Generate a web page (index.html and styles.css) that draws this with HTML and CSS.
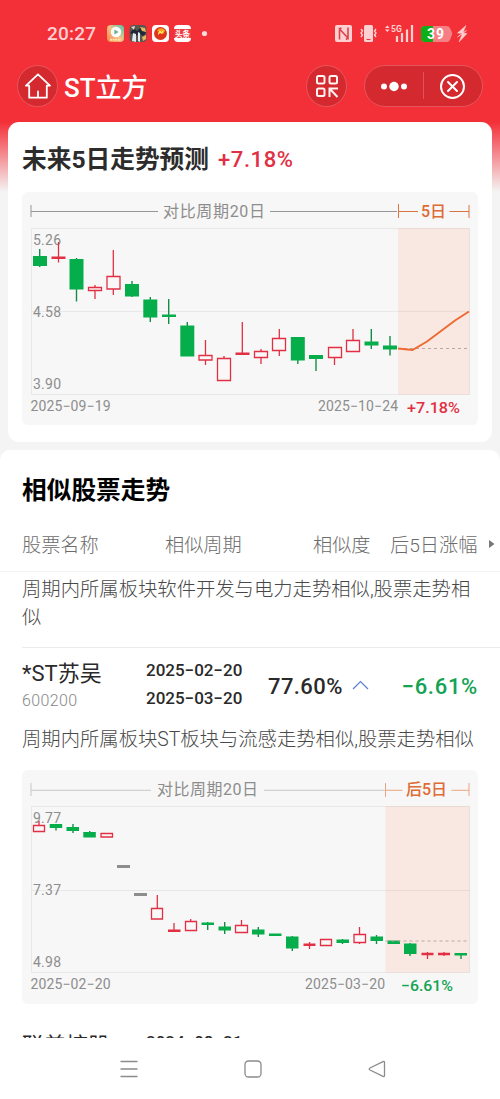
FILE: index.html
```html
<!DOCTYPE html>
<html lang="zh-CN">
<head>
    <meta charset="UTF-8">
    <meta name="viewport" content="width=device-width, initial-scale=1.0">
    <title>ST立方</title>
    <link rel="stylesheet" href="styles.css">
</head>
<body>
    <div class="statusbar">
        <span class="clock">20:27</span>
        <svg class="apps" width="102" height="18" viewBox="0 0 102 18">
            <defs>
                <linearGradient id="video" x1="0" y1="1" x2="1" y2="0">
                    <stop offset="0" stop-color="#ff8248"/>
                    <stop offset="0.5" stop-color="#f2c184"/>
                    <stop offset="1" stop-color="#48c9b2"/>
                </linearGradient>
            </defs>
            <rect x="0" y="0" width="17" height="17" rx="4" fill="url(#video)"/>
            <circle cx="9" cy="7" r="5.2" fill="#fff"/>
            <path d="M7.4 4.5l4.3 2.5-4.3 2.5z" fill="#63b487"/>
            <path d="M3 14.8h11" stroke="#ffe3b0" stroke-width="2" stroke-dasharray="2 .6"/>
            <rect x="22.5" y="0" width="17" height="17" rx="4" fill="#5b5650"/>
            <path d="M23 8l4-5 3 3 4-4 5 6-3 3-4-3-3 3z" fill="#222936"/>
            <path d="M25 16l1-8 3 1v8zM31 16V7l2 1v9z" fill="#e1eaf0"/>
            <path d="M33 2l5 1 1 4-4-1zM35 12l4-2v4l-3 2z" fill="#e5b660"/>
            <path d="M24 2l4-1-1 4z" fill="#e0d6c2"/>
            <rect x="45" y="0" width="17" height="17" rx="4" fill="#fff"/>
            <circle cx="53.5" cy="8.5" r="6.5" fill="#e1341d"/>
            <path d="M50 6c2-4 7-3 8 0l-2 3-3-2z" fill="#f6a020"/>
            <path d="M51 8l2-3 1 2 3-2-2 4-2-1-2 2z" fill="#ffe85d"/>
            <rect x="67" y="0" width="17" height="17" rx="4" fill="#fff"/>
            <rect x="67" y="4" width="17" height="9" fill="#ee3c40"/>
            <text x="68" y="11.5" class="app-label">头条</text>
            <circle cx="97.5" cy="8.5" r="2.6" fill="#ffd8d9"/>
        </svg>
        <svg class="signals" width="136" height="20" viewBox="0 0 136 20">
            <rect x="0" y="1" width="17" height="17" rx="2" fill="#ffd0d2"/>
            <path d="M4.500 15.500V5l8.500 9V3.500M4.500 5l2-1M13 14l-2 1.500" fill="none" stroke="#d8444c" stroke-width="1.6"/>
            <rect x="29" y="1" width="9" height="17" rx="1.5" fill="#ffd0d2"/>
            <path d="M31.5 15.5h4" stroke="#ed3540"/>
            <path d="M26 5l1.500 2-1.500 2 1.500 2-1.500 2M41 5l-1.500 2 1.500 2-1.500 2 1.500 2" fill="none" stroke="#ffd0d2" stroke-width="1.400"/>
            <path d="M50 4l2.300-2.500L54.600 4zM50 5.500l2.300 2.500 2.300-2.500z" fill="#ffd0d2"/>
            <text x="56" y="7.700" class="net-label">5G</text>
            <path d="M62 18v-6M67 18V9M72 18V5.500M77 18V1" stroke="#ffd0d2" stroke-width="2.200"/>
            <path d="M90 2h22q2 0 3 2l2 4.200q.5 1.300 0 2.500L115 16q-1 2-3 2H90q-4 0-4-4V6q0-4 4-4z" fill="#f57f84"/>
            <path d="M98 2h-8q-4 0-4 4v8q0 4 4 4h8z" fill="#0caf16"/>
            <text x="92" y="15" textLength="17" class="battery-label">39</text>
            <path d="M131 1.500l-8.500 7.500 5 .4-3.500 8.600 8-8.500-4.200-.5z" fill="#ffd0d2" stroke="#ffd0d2" stroke-width=".5"/>
            <path d="M122.500 13l9-6.500" stroke="#ffd0d2"/>
        </svg>
    </div>

    <div class="navbar">
        <span class="round-btn">
            <svg width="28" height="28" viewBox="0 0 28 28" fill="none" stroke="#fff" stroke-width="1.800" stroke-linecap="round" stroke-linejoin="round">
                <path d="M2 13.700L14 2.300l12 11.400h-3.200v12H5.200v-12zM14 19.500v5.500"/>
            </svg>
        </span>
        <h1>ST立方</h1>
        <span class="round-btn scan-btn">
            <svg width="24" height="24" viewBox="0 0 24 24" fill="none" stroke="#fff4f1" stroke-width="2">
                <rect x="2" y="2" width="7.500" height="7.500" rx="1.500"/>
                <rect x="14.500" y="2" width="7.500" height="7.500" rx="1.500"/>
                <rect x="2" y="14.500" width="7.500" height="7.500" rx="1.500"/>
                <path d="M14.500 23v-8.500h8.500M14.500 14.500l8 8.500"/>
            </svg>
        </span>
        <div class="capsule">
            <svg width="118" height="40" viewBox="0 0 118 40">
                <circle cx="19" cy="20.500" r="3" fill="#fff"/>
                <circle cx="29" cy="20.500" r="4.700" fill="#fff"/>
                <circle cx="39" cy="20.500" r="3" fill="#fff"/>
                <path d="M58.500 6v27" stroke="#e45157"/>
                <circle cx="87.500" cy="20.500" r="11.500" fill="none" stroke="#fff" stroke-width="2"/>
                <path d="M83 16l9 9M92 16l-9 9" stroke="#fff" stroke-width="2" stroke-linecap="round"/>
            </svg>
        </div>
    </div>

    <section class="forecast">
        <h2>未来5日走势预测<span class="up">+7.18%</span></h2>
        <svg class="chart" width="456" height="233" viewBox="22 192 456 233">
            <g class="range">
                <path d="M31 205v12M31 211.500h127M270 211.500h127"/>
                <text x="163" y="217" textLength="102">对比周期20日</text>
            </g>
            <g class="range-next">
                <path d="M398.500 204v14M398.500 211.500H418M449.500 211.500H469M469 205v13"/>
                <text x="421" y="217" textLength="25">5日</text>
            </g>
            <rect class="shade" x="398" y="228" width="71.500" height="166.500"/>
            <path class="grid" d="M31.500 228.500H469.500V394.500H31.500zM31.500 311.500H469.500"/>
            <g class="axis">
                <text x="33" y="245" textLength="28">5.26</text>
                <text x="33" y="317" textLength="28">4.58</text>
                <text x="33" y="389" textLength="28">3.90</text>
                <text x="30.500" y="411" textLength="80">2025−09−19</text>
                <text x="318" y="411" textLength="80">2025−10−24</text>
            </g>
            <text class="change up" x="407" y="412.500" textLength="53" lengthAdjust="spacingAndGlyphs">+7.18%</text>
            <g class="fall">
                <path d="M39.700 249v18M76.500 258v43.500M132 281v16M150.300 297v25M168.700 299v25M187.300 322v34M297.800 337v27M316 355v16M371.300 329v20M390 336v19.500"/>
                <path d="M33 256h14v10H33zM69.500 259h14v30.500h-14zM125 284h14v12.500h-14zM143.300 299.500h14V317.500h-14zM162 314.500h14v2.500H162zM180.300 325.500h14V356.500h-14zM290.800 337h14v23.500h-14zM309 355h14v4h-14zM364.500 341.500h14v4h-14zM383 345.500h14v4h-14z"/>
            </g>
            <g class="rise">
                <path d="M58.500 242v20.500M95 285v2M95 291v8M113.300 250v26M113.300 289v6M205.500 340v15M205.500 360v5M224 356v2M242.300 322v33M261 349v2M261 358v6M279.300 329v9M279.300 351v5M334.500 358v7M353 329v11"/>
                <path class="flat" d="M51.500 256.500h14v2.500h-14zM235.500 352.500h14v2.500h-14z"/>
                <path d="M88.500 287.500h13v3h-13zM107 276.500h13V289H107zM199 355.500h13V360h-13zM217.500 358.500h13V380.500h-13zM254.500 351.500h13v6h-13zM272.500 338.500h13V350.500h-13zM328.500 347.500h13V357.500h-13zM346.500 340.500h13V351.500h-13z"/>
            </g>
            <path class="baseline" d="M398 348.500H469"/>
            <path class="trend" d="M398 348.500l14.500 1.500L427 341.500l14-10.500 14-10.500 14-9"/>
        </svg>
    </section>

    <section class="similar">
        <h2>相似股票走势</h2>
        <div class="table-head">
            <span class="col-name">股票名称</span>
            <span class="col-period">相似周期</span>
            <span class="col-rate">相似度</span>
            <span class="col-next">后5日涨幅</span>
            <svg width="6" height="8" viewBox="0 0 6 8"><path d="M0 0l5.500 4L0 8z" fill="#777"/></svg>
        </div>
        <p class="reason first">周期内所属板块软件开发与电力走势相似,股票走势相似</p>

        <div class="stock">
            <div class="stock-name">
                <strong>*ST苏吴</strong>
                <small>600200</small>
            </div>
            <div class="stock-period">
                <span>2025−02−20</span>
                <span>2025−03−20</span>
            </div>
            <span class="stock-rate">77.60%</span>
            <svg class="chevron" width="17" height="10" viewBox="0 0 17 10"><path d="M1 9l7.500-7.500L16 9" fill="none" stroke="#5a7fd0" stroke-width="1.200"/></svg>
            <span class="stock-change down">−6.61%</span>
        </div>
        <p class="reason">周期内所属板块ST板块与流感走势相似,股票走势相似</p>

        <svg class="chart" width="456" height="234" viewBox="22 770 456 234">
            <g class="range light">
                <path d="M31 783v13M31 790.300h120M264 790.300h121"/>
                <text x="157" y="795" textLength="101">对比周期20日</text>
            </g>
            <g class="range-next light">
                <path d="M385.500 783v14M385.500 790.300H402.500M451.500 790.300H469M469 783v13"/>
                <text x="406" y="795" textLength="41">后5日</text>
            </g>
            <rect class="shade" x="385.500" y="806" width="84" height="166.500"/>
            <path class="grid" d="M31.500 806.500H469.500V972.500H31.500zM31.500 890.500H469.500"/>
            <g class="axis">
                <text x="33" y="823" textLength="28">9.77</text>
                <text x="33" y="895" textLength="28">7.37</text>
                <text x="33" y="967" textLength="28">4.98</text>
                <text x="30.500" y="989" textLength="80">2025−02−20</text>
                <text x="305" y="989" textLength="80">2025−03−20</text>
            </g>
            <text class="change down" x="401" y="990.500" textLength="52" lengthAdjust="spacingAndGlyphs">−6.61%</text>
            <path d="M117 865h13v3h-13zM134 893h13v3h-13z" fill="#8d8d8d"/>
            <g class="fall">
                <path d="M56 824v6.500M73 824v9M89.700 831v6M207.700 922v8M224.700 922v12M258.300 927v10M292.300 936v15M342.500 939v5M376.500 935v9M410 943v13M461 953v6"/>
                <path d="M49.700 824h12.500v4H49.700zM66.500 827h12.500v4H66.500zM83.300 832h12.500v5.500H83.300zM201.500 922.500H214v2.500h-12.500zM218.500 926.500H231v4h-12.500zM252 929.500h12.500v5H252zM269 933.500h12.500v2.500H269zM286 936.500h12.500V948.500H286zM336.500 939.500H349v3.500h-12.500zM370.500 936.500H383v4.500h-12.500zM387.500 940.500H400v3.500h-12.500zM404 943.500h12.500V954H404zM454.500 953h12.500v2.500h-12.500z"/>
            </g>
            <g class="rise">
                <path d="M39 821v4M157.300 895v13M174 923v8M190.700 919v3M241.500 920v6M309.500 942v7M359.500 927v7M359.500 942v2M427.500 952v7M444 952v4"/>
                <path class="flat" d="M168 929.500h12.500v2.500H168zM303.500 943.500h12v2.500h-12zM421.500 952.700h12v2.500h-12zM438 952.700h12v2.500h-12z"/>
                <path d="M33.500 825.500h11V831.500h-11zM101 833.500h11.500v3.500H101zM151.500 908.500h11V919h-11zM185.500 921.500h11V930.500h-11zM235.500 925.500h12V932.500h-12zM320.500 939.500h11V945.500h-11zM354 934.500h11.500V942.500H354z"/>
            </g>
            <path class="baseline" d="M385.500 941H469"/>
        </svg>

        <div class="stock next-stock">
            <div class="stock-name">
                <strong>联美控股</strong>
            </div>
            <div class="stock-period">
                <span>2024−08−21</span>
            </div>
        </div>
    </section>

    <div class="system-nav">
        <svg width="18" height="18" viewBox="0 0 18 18"><path d="M.5 1.500h17M.5 9h17M.5 16.500h17"/></svg>
        <svg width="18" height="18" viewBox="0 0 18 18"><rect x="1" y="1" width="16" height="16" rx="3.500"/></svg>
        <svg width="18" height="18" viewBox="0 0 18 18"><path d="M15 1.600L2 8q-1.600 1 0 2l13 6.400q1.500.5 1.500-1V2.600q0-1.500-1.500-1z"/></svg>
    </div>
</body>
</html>
```

FILE: styles.css
```css
* {
    box-sizing: border-box;
}
body {
    display: flex;
    flex-direction: column;
    width: 500px;
    height: 1099px;
    margin: 0;
    overflow: hidden;
    font-family: Roboto, "Noto Sans CJK SC", sans-serif;
    background: linear-gradient(#f33038 0, #f33038 122px, #f4f4f4 192px) #f4f4f4;
}
h1, h2, p {
    margin: 0;
}
svg {
    display: block;
    flex: none;
}

/* status bar */
.statusbar {
    display: flex;
    align-items: center;
    height: 66px;
    padding: 1px 0 0 47px;
}
.clock {
    width: 60px;
    font: 500 19px Roboto, sans-serif;
    color: #ffd0d2;
    letter-spacing: 0.2px;
}
.apps {
    margin-right: 126px;
}
.app-label {
    font: 700 7.5px "Noto Sans CJK SC", sans-serif;
    fill: #fff;
}
.net-label {
    font: 700 8.5px Roboto, sans-serif;
    fill: #ffd0d2;
}
.battery-label {
    font: 700 14px Roboto, sans-serif;
    fill: #fff;
}

/* title bar */
.navbar {
    display: flex;
    align-items: center;
    height: 40px;
    padding-left: 17px;
}
.round-btn {
    display: flex;
    align-items: center;
    justify-content: center;
    width: 41px;
    height: 42px;
    flex: none;
    border: 1px solid #e7545b;
    border-radius: 50%;
    background: #d3292f;
}
.navbar h1 {
    width: 248px;
    flex: none;
    padding: 3px 0 0 6px;
    font-size: 26px;
    font-weight: 500;
    line-height: 40px;
    color: #fff;
}
.scan-btn {
    margin-right: 17px;
}
.capsule {
    width: 119px;
    height: 42px;
    flex: none;
    border: 1px solid #e7545b;
    border-radius: 21px;
    background: #d3292f;
}

/* forecast card */
.forecast {
    width: 484px;
    height: 320px;
    flex: none;
    margin: 16px 8px 8px;
    padding: 15px 14px 0;
    border-radius: 11px;
    background: #fff;
}
.forecast h2 {
    display: flex;
    height: 55px;
    font-size: 24.7px;
    font-weight: 700;
    line-height: 46px;
    color: #2c2c2c;
}
.forecast h2 span {
    margin-left: 9px;
    font-size: 22px;
    font-weight: 500;
    letter-spacing: 0.6px;
}

/* charts */
.chart {
    border-radius: 6px;
    background: #f7f7f7;
}
.chart text {
    font-size: 16px;
}
.range path {
    stroke: #969696;
}
.range text {
    fill: #8d8d8d;
}
.range.light path {
    stroke: #c8c8c8;
}
.range-next path {
    stroke: #db7442;
}
.range-next.light path {
    stroke: #e9a583;
}
.chart .range-next text {
    font-weight: 500;
    fill: #dd6c36;
}
.shade {
    fill: #f9e8e1;
}
.grid {
    fill: none;
    stroke: #000;
    stroke-opacity: 0.06;
}
.chart .axis text {
    font-size: 14px;
    fill: #8d8d8d;
}
.chart .change {
    font-size: 15.5px;
    font-weight: 500;
}
.up {
    fill: #e12f43;
    color: #e12f43;
}
.down {
    fill: #13a353;
    color: #13a353;
}
.fall path {
    fill: #06ad4b;
}
.fall path:first-child {
    stroke: #168d46;
    stroke-width: 1.4;
}
.rise path {
    stroke: #e12f43;
    stroke-width: 1.3;
    fill: none;
}
.rise .flat {
    stroke: none;
    fill: #e12f43;
}
.rise path:last-child {
    fill: #f9f7f7;
}
.baseline {
    stroke: #bba8a0;
    stroke-dasharray: 3 3;
}
.trend {
    fill: none;
    stroke: #ef6a32;
    stroke-width: 2;
}

/* similar stocks */
.similar {
    height: 588px;
    flex: none;
    overflow: hidden;
    border-radius: 10px 10px 0 0;
    background: #fff;
}
.similar h2 {
    height: 71px;
    padding: 18px 0 0 22px;
    font-size: 24.7px;
    font-weight: 700;
    line-height: 46px;
    color: #000;
}
.table-head {
    display: flex;
    align-items: center;
    height: 51px;
    padding: 0 0 4px 22px;
    border-bottom: 1px solid #f2f2f2;
    font-size: 19.2px;
    font-weight: 300;
    color: #6c6c6c;
    white-space: nowrap;
}
.col-name {
    width: 143px;
}
.col-period {
    width: 148px;
}
.col-rate {
    width: 77px;
}
.col-next {
    width: 99px;
}
.reason {
    height: 28px;
    margin-left: 22px;
    padding-top: 1px;
    font-size: 19.33px;
    font-weight: 300;
    line-height: 28px;
    color: #484848;
    white-space: nowrap;
}
.reason.first {
    width: 456px;
    height: 75px;
    padding-top: 4px;
    white-space: normal;
}
.stock {
    display: flex;
    height: 78px;
    margin-left: 22px;
    border-top: 1px solid #ebebeb;
}
.stock-name {
    display: flex;
    flex-direction: column;
    width: 124px;
    padding-top: 10px;
}
.stock-name strong {
    font-size: 22px;
    font-weight: 400;
    line-height: 32px;
    color: #2a2a2a;
}
.stock-name small {
    font-size: 16px;
    font-weight: 300;
    line-height: 22px;
    letter-spacing: 0.4px;
    color: #888;
}
.stock-period {
    display: flex;
    flex-direction: column;
    width: 122px;
    padding-top: 8px;
    font-size: 17px;
    font-weight: 500;
    line-height: 28px;
    color: #2a2a2a;
}
.stock-rate {
    width: 84px;
    font-size: 22px;
    font-weight: 500;
    line-height: 77px;
    letter-spacing: 0.4px;
    color: #2a2a2a;
}
.chevron {
    margin-top: 32px;
}
.stock-change {
    width: 109px;
    font-size: 22px;
    font-weight: 500;
    line-height: 77px;
    letter-spacing: 0.7px;
    text-align: right;
}
.similar .chart {
    margin: 17px 0 0 22px;
}
.next-stock {
    margin-top: 15px;
    border-top-color: transparent;
}

/* bottom keys */
.system-nav {
    display: flex;
    flex: 1;
    gap: 106px;
    padding: 22px 0 0 120px;
    background: #fff;
}
.system-nav svg {
    fill: none;
    stroke: #8b8b8b;
    stroke-width: 1.3;
}
```
